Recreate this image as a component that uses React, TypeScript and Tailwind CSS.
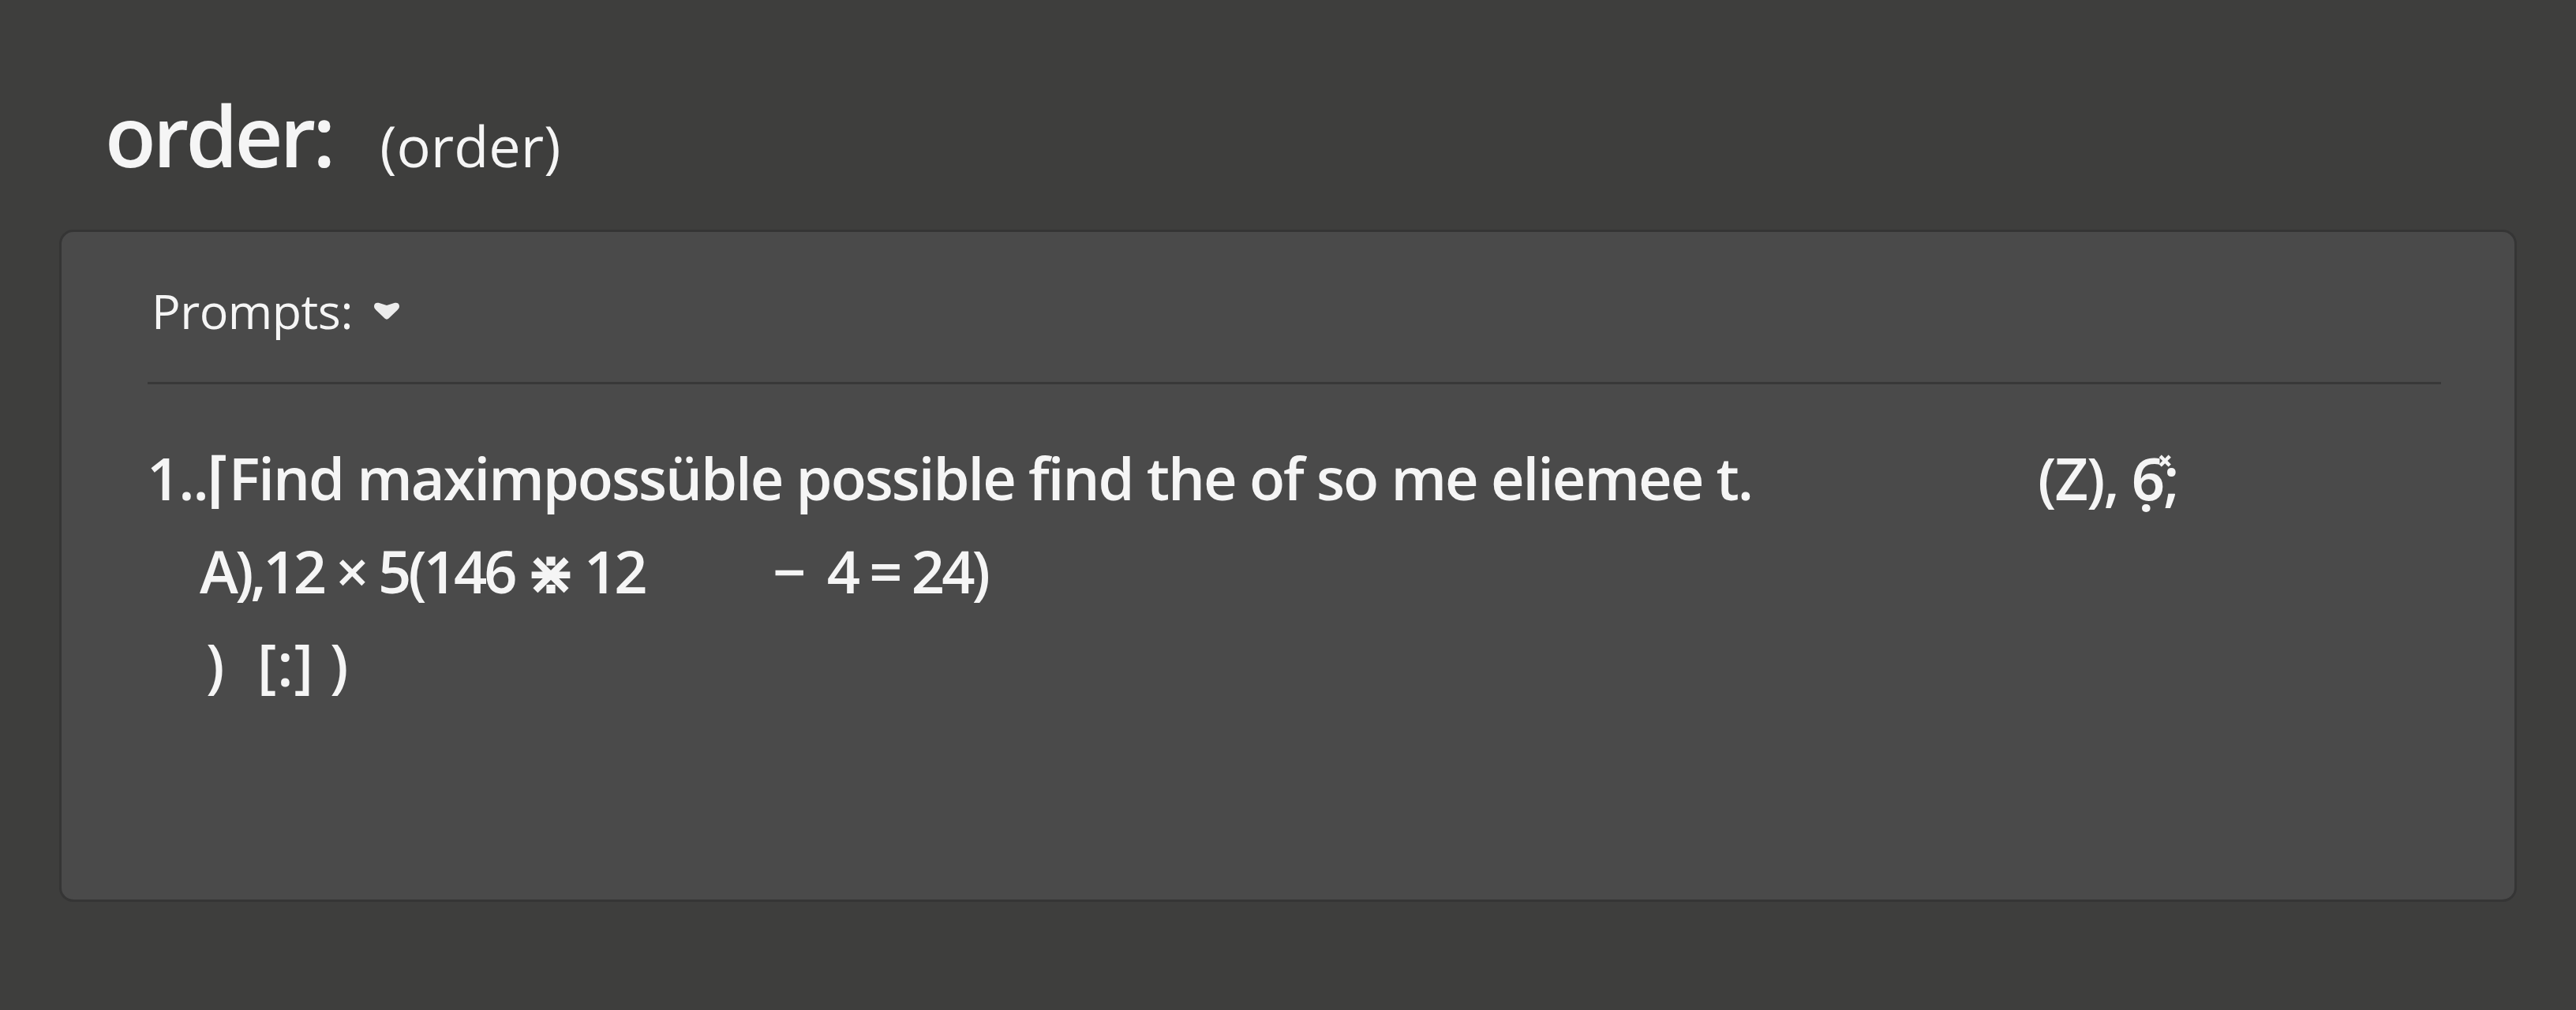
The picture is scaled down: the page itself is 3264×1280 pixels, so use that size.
const sans = "font-['Open_Sans','Noto_Sans',sans-serif]";

function Caret() {
  return (
    <svg viewBox="0 0 34 22" className="h-[22px] w-[34px] shrink-0" aria-hidden>
      <path
        d="M1 5 C1 1.5 4 0 7.5 1 L17 4 L26.5 1 C30 0 33 1.5 33 5 C33 7 32 8.5 30.5 10 L19.5 20.5 C18 22 16 22 14.5 20.5 L3.5 10 C2 8.5 1 7 1 5 Z"
        fill="#ededed"
      />
    </svg>
  );
}

export default function App() {
  return (
    <div className={`h-[1280px] w-full bg-[#3e3e3d] px-[75px] pt-[118px] text-[#f5f5f5] ${sans}`}>
      <div className="flex items-baseline gap-[60px] pl-[58px]">
        <h1 className="text-[106px] leading-none font-semibold tracking-[-4px]">order:</h1>
        <span className="text-[72px] leading-none">(order)</span>
      </div>

      <section className="mt-[67px] h-[852px] rounded-[18px] border-[3px] border-[#353535] bg-[#4a4a4a] pt-[69px]">
        <div className="flex items-center gap-[26px] pl-[114px]">
          <span className="text-[61px] leading-none tracking-[-0.5px]">Prompts:</span>
          <Caret />
        </div>
        <div className="mt-[60px] ml-[109px] mr-[93px] h-[3px] bg-[#383838]" />

        <div className="mt-[60px] pl-[108px] text-[74px] leading-[118px] font-semibold">
          <div className="flex tracking-[-2px]">
            <span className="w-[2396px] shrink-0">1..⌈Find maximpossüble possible find the of so me eliemee t.</span>
            <span>(Z), 6̣̽;</span>
          </div>
          <div className="flex pl-[67px] tracking-[-4px]">
            <span className="w-[726px] shrink-0">A),12 × 5(146 ⋇ 12</span>
            <span>−&nbsp;&nbsp;4 = 24)</span>
          </div>
          <div className="pl-[75px] tracking-[1px]">)&nbsp;&nbsp;[:] )</div>
        </div>
      </section>
    </div>
  );
}
